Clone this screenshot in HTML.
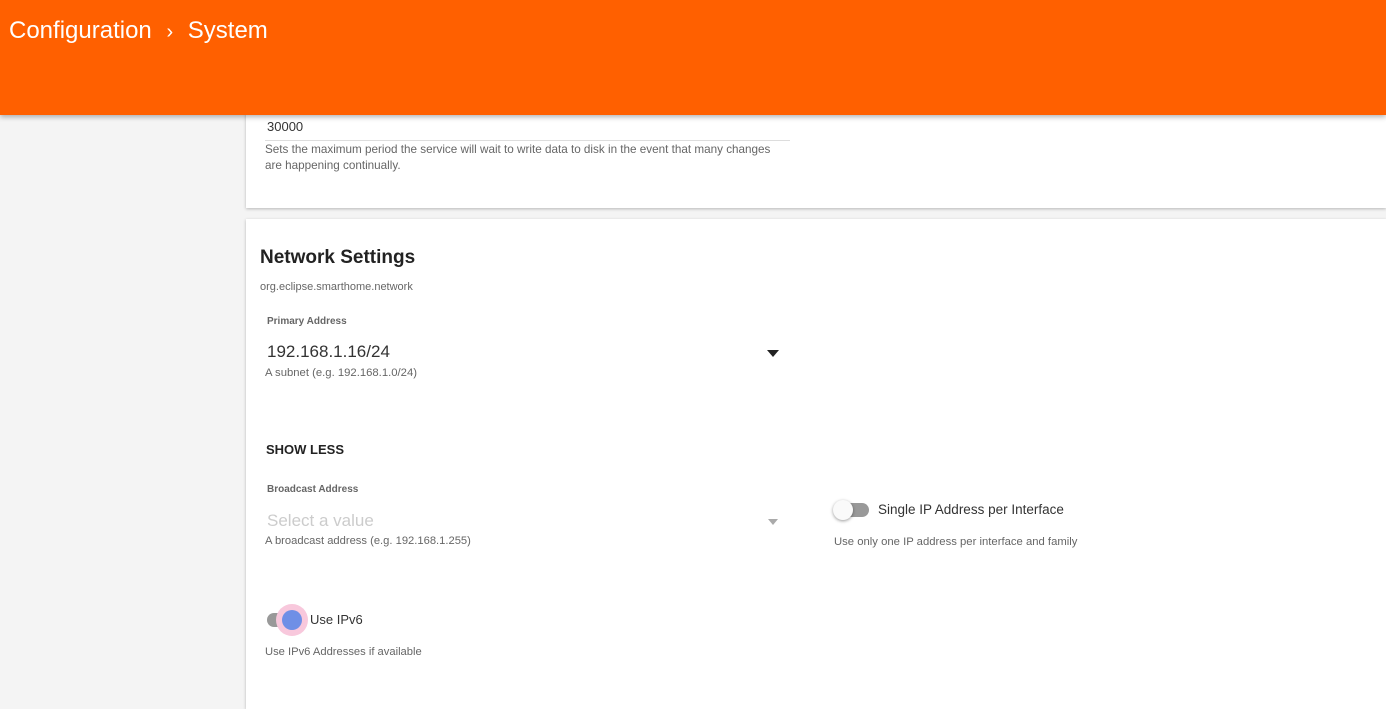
<!DOCTYPE html>
<html><head><style>
body{margin:0;width:1386px;height:699px;overflow:hidden;background:#f4f4f4;font-family:"Liberation Sans",sans-serif;position:relative}
.a{position:absolute;white-space:nowrap}
</style></head><body>
<div class="a" style="left:246px;top:100px;width:1140px;height:108px;background:#fff;box-shadow:0 1px 3px rgba(0,0,0,.25)"></div>
<div class="a" style="left:246px;top:219px;width:1140px;height:490px;background:#fff;box-shadow:0 1px 3px rgba(0,0,0,.25)"></div>
<div class="a" style="left:0;top:0;width:1386px;height:115px;background:#ff6000;box-shadow:0 2px 5px rgba(0,0,0,.3)"></div>
<div class="a" style="left:9px;top:17px;font-size:24px;color:#fff">Configuration <span style="margin:0 8px;font-size:20px">›</span> System</div>
<div class="a" style="left:267px;top:119px;font-size:13px;color:#333">30000</div>
<div class="a" style="left:265px;top:140px;width:525px;height:1px;background:#ddd"></div>
<div class="a" style="left:265px;top:142px;font-size:11.7px;color:#666;line-height:16px">Sets the maximum period the service will wait to write data to disk in the event that many changes<br>are happening continually.</div>
<div class="a" style="left:260px;top:247px;font-size:19px;font-weight:bold;color:#222">Network Settings</div>
<div class="a" style="left:260px;top:281px;font-size:11px;color:#666">org.eclipse.smarthome.network</div>
<div class="a" style="left:267px;top:316px;font-size:10px;font-weight:bold;color:#666">Primary Address</div>
<div class="a" style="left:267px;top:342px;font-size:17px;color:#333">192.168.1.16/24</div>
<div class="a" style="left:767px;top:350px;border-left:6px solid transparent;border-right:6px solid transparent;border-top:7px solid #222"></div>
<div class="a" style="left:265px;top:367px;font-size:11.3px;color:#666">A subnet (e.g. 192.168.1.0/24)</div>
<div class="a" style="left:266px;top:442px;font-size:13px;font-weight:bold;color:#222">SHOW LESS</div>
<div class="a" style="left:267px;top:484px;font-size:10px;font-weight:bold;color:#666">Broadcast Address</div>
<div class="a" style="left:267px;top:511px;font-size:17px;color:#ccc">Select a value</div>
<div class="a" style="left:768px;top:519px;border-left:5px solid transparent;border-right:5px solid transparent;border-top:6px solid #aaa"></div>
<div class="a" style="left:265px;top:535px;font-size:11.2px;color:#666">A broadcast address (e.g. 192.168.1.255)</div>
<div class="a" style="left:835px;top:503px;width:34px;height:14px;border-radius:7px;background:#999"></div>
<div class="a" style="left:833px;top:500px;width:20px;height:20px;border-radius:50%;background:#fafafa;box-shadow:0 1px 3px rgba(0,0,0,.4)"></div>
<div class="a" style="left:878px;top:502px;font-size:13.5px;color:#333">Single IP Address per Interface</div>
<div class="a" style="left:834px;top:536px;font-size:11.3px;color:#666">Use only one IP address per interface and family</div>
<div class="a" style="left:267px;top:613px;width:34px;height:14px;border-radius:7px;background:#999"></div>
<div class="a" style="left:276px;top:604px;width:32px;height:32px;border-radius:50%;background:#f8c8dc"></div>
<div class="a" style="left:282px;top:610px;width:20px;height:20px;border-radius:50%;background:#6f8fe6"></div>
<div class="a" style="left:310px;top:612px;font-size:13px;color:#333">Use IPv6</div>
<div class="a" style="left:265px;top:646px;font-size:11.2px;color:#666">Use IPv6 Addresses if available</div>
</body></html>
